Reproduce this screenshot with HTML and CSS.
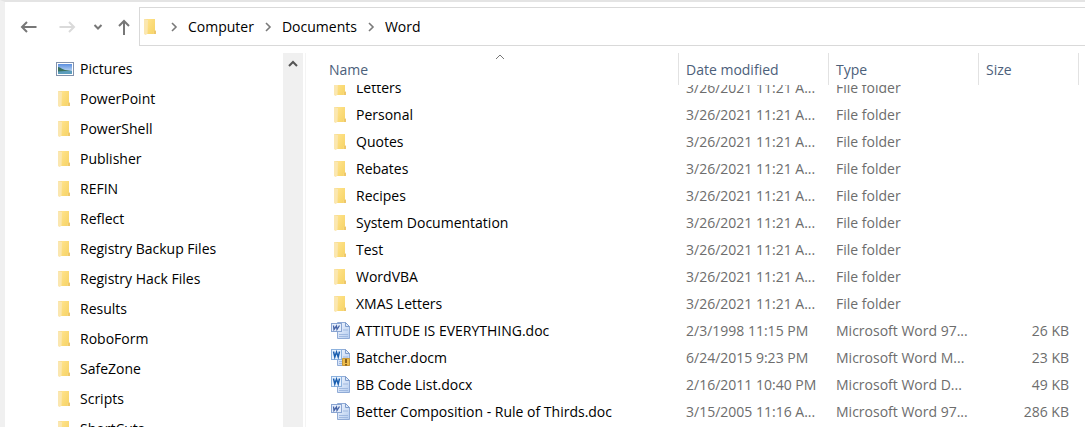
FILE: index.html
```html
<!DOCTYPE html>
<html lang="en">
<head>
    <meta charset="UTF-8">
    <title>Word</title>
    <link rel="stylesheet" href="styles.css">
</head>
<body>
    <svg class="sprite" aria-hidden="true">
        <defs>
            <linearGradient id="folderFront" x1="0" y1="0" x2="1" y2="1">
                <stop offset="0" stop-color="#ffe38c"/>
                <stop offset="1" stop-color="#f6d365"/>
            </linearGradient>
            <linearGradient id="sky" x1="0" y1="0" x2="0" y2="1">
                <stop offset="0" stop-color="#5b8fe0"/>
                <stop offset="1" stop-color="#e2f2fb"/>
            </linearGradient>
            <linearGradient id="paper" x1="0" y1="0" x2="1" y2="1">
                <stop offset="0" stop-color="#f4f8fe"/>
                <stop offset="1" stop-color="#b3cbef"/>
            </linearGradient>
        </defs>
        <symbol id="folder" viewBox="0 0 20 20">
            <path d="M3 2h11v11l1 1v3H3z" fill="#f8dd8e"/>
            <path d="M3 2l4 1v13.500L4.500 18 3 17z" fill="#fbe7b0"/>
            <path d="M7 2h7v11l-1.500 1.500V17H6.500z" fill="url(#folderFront)"/>
            <path d="M13 13.500l2 .5v3h-2z" fill="#eec76c"/>
        </symbol>
        <symbol id="pictures" viewBox="0 0 20 20">
            <rect x="1.500" y="3.500" width="17" height="13" fill="#fff" stroke="#8292ac"/>
            <rect x="3" y="5" width="14" height="10" fill="url(#sky)"/>
            <path d="M3 8c3 .2 4 2.500 7 3 3 .6 5 .3 7 1v1H3z" fill="#39705c"/>
            <path d="M3 12.500c5-1 9-.5 14-.5v3H3z" fill="#5b9cbc"/>
        </symbol>
        <symbol id="doc" viewBox="0 0 20 20">
            <path d="M6.500 1.500h8l4 4v12h-12z" fill="url(#paper)" stroke="#90abd6"/>
            <path d="M14.500 1.500v4h4z" fill="#dce9fb" stroke="#7f9dcc"/>
            <path d="M12 9h5M8 13.500h9M8 15.500h9" stroke="#a0b9e0"/>
            <rect x=".5" y="2.500" width="10" height="8" fill="#e5eefc" stroke="#8aa5d2"/>
            <path d="M2.500 4.500l.5 4 2.500-3.500 .5 3.500L8.500 4.500" fill="none" stroke="#4562a5" stroke-width="1.300"/>
        </symbol>
        <symbol id="docx" viewBox="0 0 20 20">
            <path d="M6.500 1.500h8l4 4v12h-12z" fill="url(#paper)" stroke="#90abd6"/>
            <path d="M14.500 1.500v4h4z" fill="#dce9fb" stroke="#7f9dcc"/>
            <path d="M12 9h5M8 13.500h9M8 15.500h9" stroke="#a0b9e0"/>
            <rect x=".5" y="1.500" width="10" height="10" fill="#e9f3ff" stroke="#8db2de"/>
            <path d="M2.500 3.500l1.300 5.500 1.700-5 1.700 5L8.500 3.500" fill="none" stroke="#1b5fb0" stroke-width="1.500"/>
        </symbol>
        <symbol id="docm" viewBox="0 0 20 20">
            <use href="#docx"/>
            <path d="M11.500 10.500h7v7h-7z" fill="#edbd4b" stroke="#c99a3a"/>
            <path d="M15 11v4M15 16v1.500" stroke="#6a430f" stroke-width="1.500"/>
        </symbol>
        <symbol id="chevron" viewBox="0 0 10 10">
            <path d="M3 1l4 4-4 4" fill="none" stroke="#7a7a7a" stroke-width="1.600"/>
        </symbol>
    </svg>

    <div class="explorer">
        <header class="toolbar">
            <button class="nav-button" type="button" aria-label="Back">
                <svg width="18" height="14" viewBox="0 0 18 14"><path d="M16.500 7H2M7 2L2 7l5 5"/></svg>
            </button>
            <button class="nav-button" type="button" aria-label="Forward" disabled>
                <svg width="18" height="14" viewBox="0 0 18 14"><path d="M1.500 7H16M11 2l5 5-5 5"/></svg>
            </button>
            <button class="nav-button small" type="button" aria-label="Recent locations">
                <svg width="10" height="8" viewBox="0 0 10 8"><path d="M1.500 2L5 5.500 8.500 2"/></svg>
            </button>
            <button class="nav-button up" type="button" aria-label="Up">
                <svg width="14" height="18" viewBox="0 0 14 18"><path d="M7 17V3M2 8l5-5 5 5"/></svg>
            </button>
            <nav class="address">
                <svg class="icon"><use href="#folder"/></svg>
                <svg class="chevron"><use href="#chevron"/></svg>
                <a href="#">Computer</a>
                <svg class="chevron"><use href="#chevron"/></svg>
                <a href="#">Documents</a>
                <svg class="chevron"><use href="#chevron"/></svg>
                <a href="#">Word</a>
            </nav>
        </header>

        <div class="content">
            <nav class="sidebar">
                <ul class="tree">
                    <li><a href="#"><svg class="icon"><use href="#pictures"/></svg>Pictures</a></li>
                    <li><a href="#"><svg class="icon"><use href="#folder"/></svg>PowerPoint</a></li>
                    <li><a href="#"><svg class="icon"><use href="#folder"/></svg>PowerShell</a></li>
                    <li><a href="#"><svg class="icon"><use href="#folder"/></svg>Publisher</a></li>
                    <li><a href="#"><svg class="icon"><use href="#folder"/></svg>REFIN</a></li>
                    <li><a href="#"><svg class="icon"><use href="#folder"/></svg>Reflect</a></li>
                    <li><a href="#"><svg class="icon"><use href="#folder"/></svg>Registry Backup Files</a></li>
                    <li><a href="#"><svg class="icon"><use href="#folder"/></svg>Registry Hack Files</a></li>
                    <li><a href="#"><svg class="icon"><use href="#folder"/></svg>Results</a></li>
                    <li><a href="#"><svg class="icon"><use href="#folder"/></svg>RoboForm</a></li>
                    <li><a href="#"><svg class="icon"><use href="#folder"/></svg>SafeZone</a></li>
                    <li><a href="#"><svg class="icon"><use href="#folder"/></svg>Scripts</a></li>
                    <li><a href="#"><svg class="icon"><use href="#folder"/></svg>ShortCuts</a></li>
                </ul>
                <div class="scrollbar">
                    <button class="scroll-up" type="button" aria-label="Scroll up">
                        <svg width="12" height="10" viewBox="0 0 12 10"><path d="M2 7l4-4 4 4"/></svg>
                    </button>
                </div>
            </nav>

            <main class="files" id="files">
                <table>
                    <thead>
                        <tr>
                            <th class="name">Name
                                <svg class="sort" width="10" height="6" viewBox="0 0 10 6"><path d="M1 5l4-4 4 4"/></svg>
                            </th>
                            <th class="date">Date modified</th>
                            <th class="type">Type</th>
                            <th class="size">Size</th>
                            <th class="rest"></th>
                        </tr>
                    </thead>
                    <tbody>
                        <tr><td><a href="#"><svg class="icon"><use href="#folder"/></svg>Letters</a></td><td>3/26/2021 11:21 A...</td><td>File folder</td><td></td></tr>
                        <tr><td><a href="#"><svg class="icon"><use href="#folder"/></svg>Personal</a></td><td>3/26/2021 11:21 A...</td><td>File folder</td><td></td></tr>
                        <tr><td><a href="#"><svg class="icon"><use href="#folder"/></svg>Quotes</a></td><td>3/26/2021 11:21 A...</td><td>File folder</td><td></td></tr>
                        <tr><td><a href="#"><svg class="icon"><use href="#folder"/></svg>Rebates</a></td><td>3/26/2021 11:21 A...</td><td>File folder</td><td></td></tr>
                        <tr><td><a href="#"><svg class="icon"><use href="#folder"/></svg>Recipes</a></td><td>3/26/2021 11:21 A...</td><td>File folder</td><td></td></tr>
                        <tr><td><a href="#"><svg class="icon"><use href="#folder"/></svg>System Documentation</a></td><td>3/26/2021 11:21 A...</td><td>File folder</td><td></td></tr>
                        <tr><td><a href="#"><svg class="icon"><use href="#folder"/></svg>Test</a></td><td>3/26/2021 11:21 A...</td><td>File folder</td><td></td></tr>
                        <tr><td><a href="#"><svg class="icon"><use href="#folder"/></svg>WordVBA</a></td><td>3/26/2021 11:21 A...</td><td>File folder</td><td></td></tr>
                        <tr><td><a href="#"><svg class="icon"><use href="#folder"/></svg>XMAS Letters</a></td><td>3/26/2021 11:21 A...</td><td>File folder</td><td></td></tr>
                        <tr><td><a href="#"><svg class="icon"><use href="#doc"/></svg>ATTITUDE IS EVERYTHING.doc</a></td><td>2/3/1998 11:15 PM</td><td>Microsoft Word 97...</td><td>26 KB</td></tr>
                        <tr><td><a href="#"><svg class="icon"><use href="#docm"/></svg>Batcher.docm</a></td><td>6/24/2015 9:23 PM</td><td>Microsoft Word M...</td><td>23 KB</td></tr>
                        <tr><td><a href="#"><svg class="icon"><use href="#docx"/></svg>BB Code List.docx</a></td><td>2/16/2011 10:40 PM</td><td>Microsoft Word D...</td><td>49 KB</td></tr>
                        <tr><td><a href="#"><svg class="icon"><use href="#doc"/></svg>Better Composition - Rule of Thirds.doc</a></td><td>3/15/2005 11:16 A...</td><td>Microsoft Word 97...</td><td>286 KB</td></tr>
                    </tbody>
                </table>
            </main>
        </div>
    </div>
    <script>
        // open the list slightly scrolled, under the sticky header
        document.getElementById('files').scrollTop = 11;
    </script>
</body>
</html>
```
FILE: styles.css
```css
* {
    box-sizing: border-box;
}
body {
    margin: 0;
    background: #fff;
    font-family: "Segoe UI", "Open Sans", "Noto Sans", sans-serif;
    font-size: 14px;
    line-height: 20px;
    color: #000;
}
a {
    color: inherit;
    text-decoration: none;
}
button {
    padding: 0;
    border: none;
    background: none;
}
.sprite {
    position: absolute;
    width: 0;
    height: 0;
}
.icon {
    width: 20px;
    height: 20px;
    flex: none;
}
.explorer {
    display: flex;
    flex-direction: column;
    height: 100vh;
    border-left: 5px solid #f0f0f0;
    border-top: 2px solid #e4e4e4;
    overflow: hidden;
}

/* toolbar */
.toolbar {
    display: flex;
    flex: none;
    align-items: center;
    height: 51px;
    padding: 0 0 2px 14px;
}
.nav-button {
    display: flex;
    align-items: center;
    justify-content: center;
    width: 20px;
    height: 30px;
    margin-right: 18px;
}
.nav-button svg {
    fill: none;
    stroke: #777;
    stroke-width: 2;
}
.nav-button:disabled svg {
    stroke: #dadada;
}
.nav-button.small {
    width: 12px;
    margin: 0 13px 0 -3px;
}
.nav-button.up {
    width: 14px;
    margin-right: 8px;
}
.address {
    display: flex;
    flex: 1;
    align-items: center;
    height: 39px;
    padding-left: 1px;
    border: 1px solid #d9d9d9;
    border-right: none;
}
.chevron {
    width: 10px;
    height: 10px;
    margin: 0 9px;
}
.address .icon + .chevron {
    margin: 0 9px 0 8px;
}

/* panes */
.content {
    display: flex;
    flex: 1;
    min-height: 0;
}
.sidebar {
    display: flex;
    flex: none;
    width: 301px;
    border-right: 1px solid #f4f4f4;
    padding-right: 2px;
    overflow: hidden;
}
.tree {
    flex: 1;
    margin: 0;
    padding: 1px 0 0 50px;
    list-style: none;
}
.tree a {
    display: flex;
    align-items: center;
    gap: 5px;
    height: 30px;
}
.scrollbar {
    width: 20px;
    background: #f0f0f0;
}
.scroll-up {
    display: flex;
    align-items: center;
    justify-content: center;
    width: 20px;
    height: 21px;
}
.scroll-up svg {
    fill: none;
    stroke: #555;
    stroke-width: 2;
}

/* file list */
.files {
    flex: 1;
    min-width: 0;
    padding: 0 0 20px 15px;
    overflow: hidden;
}
table {
    width: 100%;
    table-layout: fixed;
    border-collapse: separate;
    border-spacing: 0;
}
th {
    position: sticky;
    top: 0;
    height: 32px;
    padding: 2px 7px 0;
    border-right: 1px solid #e2e2e2;
    background: #fff;
    color: #4c607a;
    font-weight: normal;
    text-align: left;
}
.name {
    width: 358px;
    padding-left: 8px;
}
.date, .type {
    width: 150px;
}
.size {
    width: 100px;
}
.rest {
    border: none;
}
.sort {
    position: absolute;
    top: 1px;
    left: calc(50% - 5px);
    fill: none;
    stroke: #777;
}
td {
    height: 27px;
    padding: 0 7px;
    color: #6d6d6d;
    white-space: nowrap;
}
td:first-child {
    padding-left: 10px;
    color: #000;
}
td:nth-child(4) {
    padding-right: 10px;
    text-align: right;
}
td a {
    display: flex;
    align-items: center;
    gap: 5px;
}
```
